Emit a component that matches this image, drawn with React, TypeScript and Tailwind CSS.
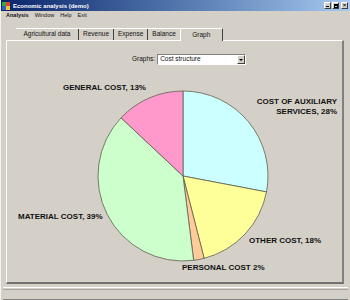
import React from 'react'

const slices = [
  { pct: 28, color: '#ccffff' },
  { pct: 18, color: '#ffff99' },
  { pct: 2, color: '#ffcc99' },
  { pct: 39, color: '#ccffcc' },
  { pct: 13, color: '#ff99cc' },
]

function slicePath(cx: number, cy: number, r: number, from: number, to: number) {
  const a0 = (from / 100) * Math.PI * 2
  const a1 = (to / 100) * Math.PI * 2
  const x0 = cx + r * Math.sin(a0)
  const y0 = cy - r * Math.cos(a0)
  const x1 = cx + r * Math.sin(a1)
  const y1 = cy - r * Math.cos(a1)
  const large = to - from > 50 ? 1 : 0
  return `M${cx},${cy} L${x0},${y0} A${r},${r} 0 ${large} 1 ${x1},${y1} Z`
}

function PieChart() {
  const cx = 176
  const cy = 110
  const r = 85
  let acc = 0
  return (
    <svg width="336" height="216" className="block">
      {slices.map((s, i) => {
        const from = acc
        acc += s.pct
        return (
          <path
            key={i}
            d={slicePath(cx, cy, r, from, acc)}
            fill={s.color}
            stroke="#5e6050"
            strokeWidth="0.8"
          />
        )
      })}
      <g fontFamily="'Liberation Sans', Arial, sans-serif" fontWeight="bold" fontSize="8" fill="#111">
        <text x="56" y="24">GENERAL COST, 13%</text>
        <text x="330" y="38" textAnchor="end">COST OF AUXILIARY</text>
        <text x="330" y="48" textAnchor="end">SERVICES, 28%</text>
        <text x="11" y="153">MATERIAL COST, 39%</text>
        <text x="242" y="177">OTHER COST, 18%</text>
        <text x="175" y="204">PERSONAL COST 2%</text>
      </g>
    </svg>
  )
}

const tabs = ['Agricultural data', 'Revenue', 'Expense', 'Balance']

export default function App() {
  return (
    <div
      className="w-[350px] h-[300px] bg-[#d4d0c8] flex flex-col overflow-hidden border-l border-[#f4f3ef] text-[#111]"
      style={{ fontFamily: "'Liberation Sans', Arial, sans-serif" }}
    >
      {/* title bar */}
      <div className="h-[11px] flex items-center bg-gradient-to-r from-[#0a246a] to-[#a6caf0] pl-[1px] pr-[2px]">
        <div className="w-[8px] h-[8px] grid grid-cols-2">
          <span className="bg-[#2fa84f]" />
          <span className="bg-[#e0412c]" />
          <span className="bg-[#2d62c8]" />
          <span className="bg-[#f2c531]" />
        </div>
        <span className="ml-[3px] text-[6px] font-bold text-white leading-none">Economic analysis (demo)</span>
        <div className="ml-auto flex gap-[1px]">
          <span className="w-[7px] h-[7px] bg-[#d4d0c8] border border-t-white border-l-white border-r-[#404040] border-b-[#404040] flex items-end justify-center">
            <span className="w-[3px] h-[1px] bg-black mb-[1px]" />
          </span>
          <span className="w-[7px] h-[7px] bg-[#d4d0c8] border border-t-white border-l-white border-r-[#404040] border-b-[#404040] flex items-center justify-center">
            <span className="w-[4px] h-[4px] border border-black border-t-2" />
          </span>
          <span className="ml-[1px] w-[7px] h-[7px] bg-[#d4d0c8] border border-t-white border-l-white border-r-[#404040] border-b-[#404040] text-[6px] leading-[5px] text-center font-bold">
            ×
          </span>
        </div>
      </div>

      {/* menu bar */}
      <div className="h-[9px] flex items-center gap-[6px] pl-[5px] text-[5.5px] leading-none">
        <span className="font-bold">Analysis</span>
        <span>Window</span>
        <span>Help</span>
        <span>Exit</span>
      </div>

      {/* tabs */}
      <div className="mt-[7px] ml-[15px] h-[13px] flex items-end text-[6.5px] leading-none">
        <div className="h-[12px] flex items-center border-t border-white">
          {tabs.map((t, i) => (
            <span
              key={t}
              className={`h-full flex items-center px-[4px] ${i === 0 ? 'w-[63px] justify-center' : ''} ${i < tabs.length - 1 ? 'border-r border-[#404040]' : ''}`}
            >
              {t}
            </span>
          ))}
        </div>
        <div className="h-[13px] w-[43px] flex items-center justify-center border-t border-l border-white border-r border-r-[#404040] bg-[#d4d0c8] relative top-[1px]">
          Graph
        </div>
      </div>

      {/* panel */}
      <div className="ml-[5px] w-[338px] h-[244px] border-t border-l border-white border-r-2 border-b-2 border-r-[#808080] border-b-[#707070] flex flex-col">
        <div className="pt-[13px] pl-[125px] flex items-center gap-[2px] text-[6.5px] leading-none">
          <span>Graphs:</span>
          <div className="w-[89px] h-[11px] bg-white border border-t-[#808080] border-l-[#808080] border-r-white border-b-white flex items-center">
            <span className="pl-[2px] flex-1">Cost structure</span>
            <span className="w-[8px] h-[9px] bg-[#d4d0c8] border border-t-white border-l-white border-r-[#404040] border-b-[#404040] flex items-center justify-center">
              <span className="w-0 h-0 border-l-[2px] border-r-[2px] border-t-[2px] border-l-transparent border-r-transparent border-t-black" />
            </span>
          </div>
        </div>
        <div className="mt-[1px]">
          <PieChart />
        </div>
      </div>

      {/* status bar */}
      <div className="mt-[3px] mx-[2px] flex-1 border-t border-white flex flex-col">
        <div className="h-[1px] bg-[#a8a59e] mt-[1px]" />
        <div className="flex-1 border-b border-[#808080]" />
      </div>
    </div>
  )
}
